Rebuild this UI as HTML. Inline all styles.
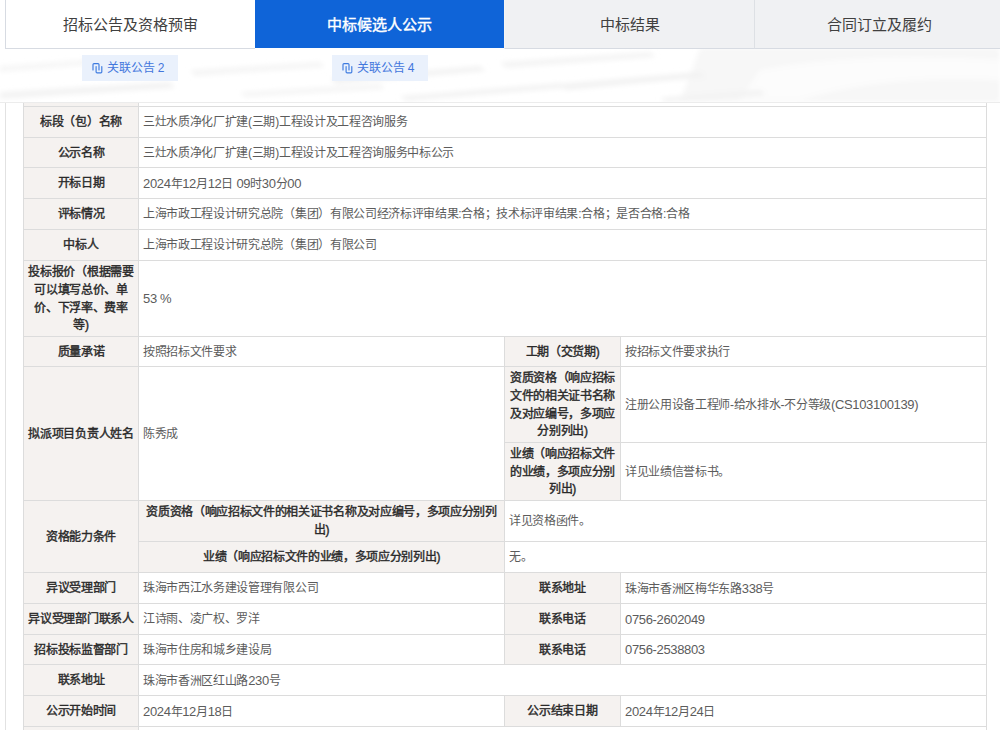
<!DOCTYPE html>
<html lang="zh-CN"><head><meta charset="utf-8">
<style>
html,body{margin:0;padding:0;width:1000px;height:730px;overflow:hidden;background:#fff;}
body{font-family:"Liberation Sans",sans-serif;position:relative;}
.wrap{position:absolute;left:5px;top:0;width:1000px;height:800px;background:#fff;border-left:1px solid #e2e2e2;}
.cell{position:absolute;box-sizing:border-box;border-top:1px solid #dcdcdc;border-left:1px solid #dcdcdc;display:flex;align-items:center;font-size:12px;line-height:17.6px;letter-spacing:-0.32px;padding-top:2px !important;}
.cell.lab{background:#f5f2f0;color:#2a2a2a;font-weight:normal;-webkit-text-stroke:0.4px #2a2a2a;justify-content:center;text-align:center;padding:0 4px 0 4px;}
.cell i{font-style:normal;font-size:13px;letter-spacing:-0.35px;}
.cell.val{background:#fff;color:#5c5c5c;padding:0 4px;}
.header{position:absolute;left:0;top:0;width:1000px;height:102px;background:#fff;border-bottom:1px solid #ececec;}
.tab{position:absolute;top:0;height:48px;box-sizing:border-box;display:flex;align-items:center;justify-content:center;font-size:15px;color:#404040;padding-bottom:2px;}
.btn{position:absolute;top:55px;width:96px;height:26px;background:#eaf1fc;color:#4276dc;font-size:12px;letter-spacing:-0.1px;}
.bt{position:absolute;left:25px;top:5px;line-height:17px;white-space:nowrap;}
</style></head><body>
<div class="wrap"></div>
<div class="cell lab" style="left:23px;top:75px;width:115px;height:31px"><span></span></div>
<div class="cell val" style="left:138px;top:75px;width:848px;height:31px"><span></span></div>
<div class="cell lab" style="left:23px;top:106px;width:115px;height:31px"><span>标段（包）名称</span></div>
<div class="cell val" style="left:138px;top:106px;width:848px;height:31px"><span>三灶水质净化厂扩建(三期)工程设计及工程咨询服务</span></div>
<div class="cell lab" style="left:23px;top:137px;width:115px;height:30px"><span>公示名称</span></div>
<div class="cell val" style="left:138px;top:137px;width:848px;height:30px"><span>三灶水质净化厂扩建(三期)工程设计及工程咨询服务中标公示</span></div>
<div class="cell lab" style="left:23px;top:167px;width:115px;height:31px"><span>开标日期</span></div>
<div class="cell val" style="left:138px;top:167px;width:848px;height:31px"><span><i>2024</i>年<i>12</i>月<i>12</i>日<i> 09</i>时<i>30</i>分<i>00</i></span></div>
<div class="cell lab" style="left:23px;top:198px;width:115px;height:31px"><span>评标情况</span></div>
<div class="cell val" style="left:138px;top:198px;width:848px;height:31px"><span>上海市政工程设计研究总院（集团）有限公司经济标评审结果:合格；技术标评审结果:合格；是否合格:合格</span></div>
<div class="cell lab" style="left:23px;top:229px;width:115px;height:31px"><span>中标人</span></div>
<div class="cell val" style="left:138px;top:229px;width:848px;height:31px"><span>上海市政工程设计研究总院（集团）有限公司</span></div>
<div class="cell lab" style="left:23px;top:260px;width:115px;height:76px"><span>投标报价（根据需要可以填写总价、单价、下浮率、费率等)</span></div>
<div class="cell val" style="left:138px;top:260px;width:848px;height:76px"><span><i>53 %</i></span></div>
<div class="cell lab" style="left:23px;top:336px;width:115px;height:30px"><span>质量承诺</span></div>
<div class="cell val" style="left:138px;top:336px;width:366px;height:30px"><span>按照招标文件要求</span></div>
<div class="cell lab" style="left:504px;top:336px;width:116px;height:30px"><span>工期（交货期)</span></div>
<div class="cell val" style="left:620px;top:336px;width:366px;height:30px"><span>按招标文件要求执行</span></div>
<div class="cell lab" style="left:23px;top:366px;width:115px;height:134px"><span>拟派项目负责人姓名</span></div>
<div class="cell val" style="left:138px;top:366px;width:366px;height:134px"><span>陈秀成</span></div>
<div class="cell lab" style="left:504px;top:366px;width:116px;height:76px"><span>资质资格（响应招标文件的相关证书名称及对应编号，多项应分别列出)</span></div>
<div class="cell val" style="left:620px;top:366px;width:366px;height:76px"><span>注册公用设备工程师-给水排水-不分等级<i>(CS103100139)</i></span></div>
<div class="cell lab" style="left:504px;top:442px;width:116px;height:58px"><span>业绩（响应招标文件的业绩，多项应分别列出)</span></div>
<div class="cell val" style="left:620px;top:442px;width:366px;height:58px"><span>详见业绩信誉标书。</span></div>
<div class="cell lab" style="left:23px;top:500px;width:115px;height:72px"><span>资格能力条件</span></div>
<div class="cell lab" style="left:138px;top:500px;width:366px;height:41px"><span>资质资格（响应招标文件的相关证书名称及对应编号，多项应分别列出)</span></div>
<div class="cell val" style="left:504px;top:500px;width:482px;height:41px"><span>详见资格函件。</span></div>
<div class="cell lab" style="left:138px;top:541px;width:366px;height:31px"><span>业绩（响应招标文件的业绩，多项应分别列出)</span></div>
<div class="cell val" style="left:504px;top:541px;width:482px;height:31px"><span>无。</span></div>
<div class="cell lab" style="left:23px;top:572px;width:115px;height:31px"><span>异议受理部门</span></div>
<div class="cell val" style="left:138px;top:572px;width:366px;height:31px"><span>珠海市西江水务建设管理有限公司</span></div>
<div class="cell lab" style="left:504px;top:572px;width:116px;height:31px"><span>联系地址</span></div>
<div class="cell val" style="left:620px;top:572px;width:366px;height:31px"><span>珠海市香洲区梅华东路<i>338</i>号</span></div>
<div class="cell lab" style="left:23px;top:603px;width:115px;height:31px"><span>异议受理部门联系人</span></div>
<div class="cell val" style="left:138px;top:603px;width:366px;height:31px"><span>江诗雨、凌广权、罗洋</span></div>
<div class="cell lab" style="left:504px;top:603px;width:116px;height:31px"><span>联系电话</span></div>
<div class="cell val" style="left:620px;top:603px;width:366px;height:31px"><span><i>0756-2602049</i></span></div>
<div class="cell lab" style="left:23px;top:634px;width:115px;height:30px"><span>招标投标监督部门</span></div>
<div class="cell val" style="left:138px;top:634px;width:366px;height:30px"><span>珠海市住房和城乡建设局</span></div>
<div class="cell lab" style="left:504px;top:634px;width:116px;height:30px"><span>联系电话</span></div>
<div class="cell val" style="left:620px;top:634px;width:366px;height:30px"><span><i>0756-2538803</i></span></div>
<div class="cell lab" style="left:23px;top:664px;width:115px;height:31px"><span>联系地址</span></div>
<div class="cell val" style="left:138px;top:664px;width:848px;height:31px"><span>珠海市香洲区红山路<i>230</i>号</span></div>
<div class="cell lab" style="left:23px;top:695px;width:115px;height:31px"><span>公示开始时间</span></div>
<div class="cell val" style="left:138px;top:695px;width:366px;height:31px"><span><i>2024</i>年<i>12</i>月<i>18</i>日</span></div>
<div class="cell lab" style="left:504px;top:695px;width:116px;height:31px"><span>公示结束日期</span></div>
<div class="cell val" style="left:620px;top:695px;width:366px;height:31px"><span><i>2024</i>年<i>12</i>月<i>24</i>日</span></div>
<div class="cell lab" style="left:23px;top:726px;width:115px;height:31px"><span></span></div>
<div class="cell val" style="left:138px;top:726px;width:848px;height:31px"><span></span></div>
<div style="position:absolute;left:986px;top:75px;width:1px;height:700px;background:#dcdcdc"></div>
<div class="header">
<svg style="position:absolute;left:0;top:0" width="1000" height="102" viewBox="0 0 1000 102">
<defs><filter id="bl" x="-20%" y="-50%" width="140%" height="200%"><feGaussianBlur stdDeviation="2.5"/></filter></defs>
<rect x="0" y="0" width="1000" height="102" fill="#fff"/>
<g filter="url(#bl)">
<path d="M700,48 L1000,48 L1000,102 L680,102 Z" fill="#f7f7f7"/>
<path d="M760,70 Q860,52 1000,60 L1000,80 Q880,74 800,100 L740,100 Z" fill="#fcfcfc"/>
<path d="M0,92 L170,82 L175,88 L0,99 Z" fill="#f3f3f3"/>
<path d="M0,66 L110,58 L115,63 L0,72 Z" fill="#f6f6f6"/>
<path d="M190,70 L320,62 L325,67 L195,76 Z" fill="#f5f5f5"/>
<path d="M330,78 L480,66 L486,71 L336,84 Z" fill="#f3f3f3"/>
<path d="M400,96 L560,83 L566,88 L406,101 Z" fill="#f3f3f3"/>
<path d="M500,62 L650,52 L656,57 L506,68 Z" fill="#f4f4f4"/>
<path d="M560,84 L700,72 L706,77 L566,90 Z" fill="#f2f2f2"/>
<path d="M660,98 L760,90 L766,95 L666,102 Z" fill="#f2f2f2"/>
<path d="M240,92 L380,84 L385,89 L245,97 Z" fill="#f5f5f5"/>
</g>
</svg>
  <div class="tab" style="left:5px;width:250px;height:49px;background:transparent;border-left:1px solid #d7dbe2;border-bottom:1px solid #d7dbe2;">招标公告及资格预审</div>
  <div class="tab" style="left:255px;width:249px;height:48px;background:#0f64d8;color:#fff;-webkit-text-stroke:0.4px #fff;padding-top:0;">中标候选人公示</div>
  <div class="tab" style="left:504px;width:250px;height:49px;background:#f0f1f3;border-left:1px solid #f5f5f5;border-bottom:1px solid #d7dbe2;">中标结果</div>
  <div class="tab" style="left:754px;width:250px;height:49px;background:#f0f1f3;border-left:1px solid #dde0e4;border-bottom:1px solid #d7dbe2;">合同订立及履约</div>
  <div class="btn" style="left:82px;"><svg width="12" height="12" viewBox="0 0 12 12" style="position:absolute;left:9px;top:7px" fill="none" stroke="#3d7be0" stroke-width="1.15" stroke-linecap="round"><path d="M2,7.9 V2.6 Q2,1.6 3,1.6 H7 Q8,1.6 8,2.6 V7.9"/><path d="M5.1,4.6 V10 Q5.1,10.9 6.1,10.9 H9.9 Q10.8,10.9 10.8,10 V4.6"/></svg><span class="bt">关联公告 2</span></div>
  <div class="btn" style="left:332px;"><svg width="12" height="12" viewBox="0 0 12 12" style="position:absolute;left:9px;top:7px" fill="none" stroke="#3d7be0" stroke-width="1.15" stroke-linecap="round"><path d="M2,7.9 V2.6 Q2,1.6 3,1.6 H7 Q8,1.6 8,2.6 V7.9"/><path d="M5.1,4.6 V10 Q5.1,10.9 6.1,10.9 H9.9 Q10.8,10.9 10.8,10 V4.6"/></svg><span class="bt">关联公告 4</span></div>
</div>
</body></html>
